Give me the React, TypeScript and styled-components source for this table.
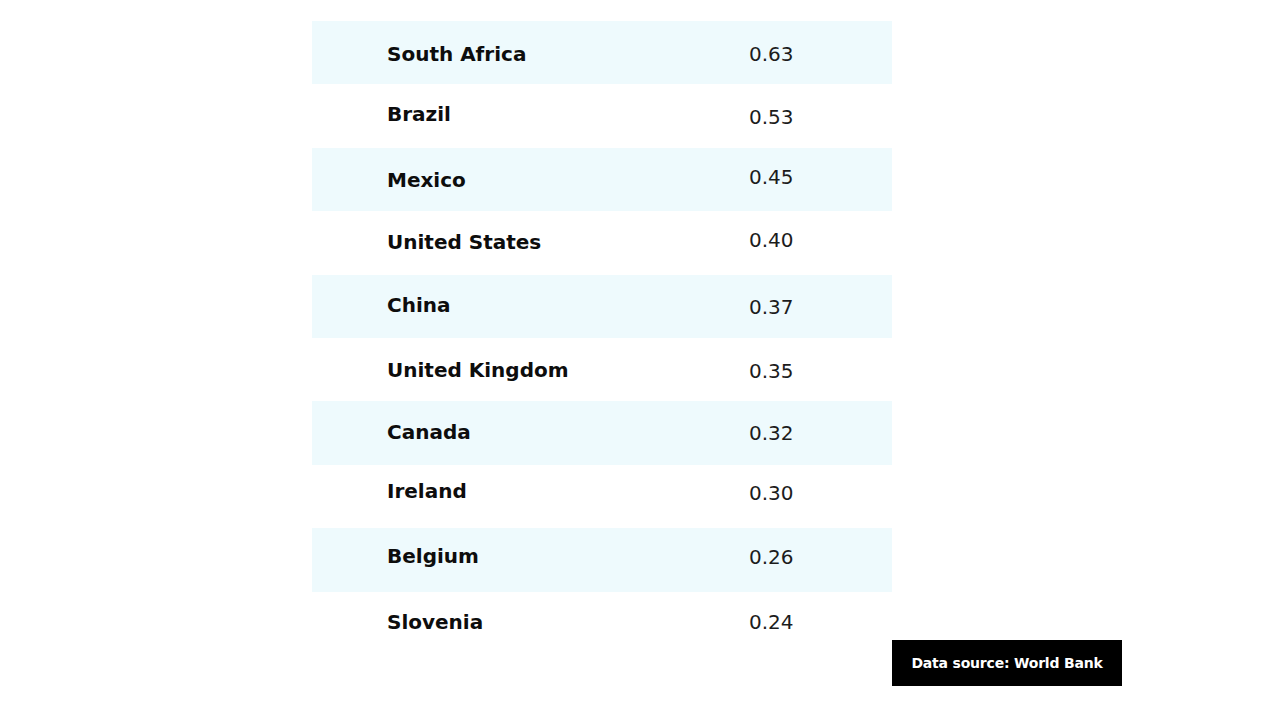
import React, { FC } from "react"
import styled, { createGlobalStyle } from "styled-components"

const GlobalStyle = createGlobalStyle`
  html, body {
    margin: 0;
    padding: 0;
    background: #ffffff;
  }
  body {
    font-family: "DejaVu Sans", "Liberation Sans", sans-serif;
    color: #111111;
  }
`

const Page = styled.main`
  display: flex;
  flex-direction: column;
  align-items: flex-start;
  padding: 21px 0 34px 312px;
  width: 1280px;
  box-sizing: border-box;
`

const Table = styled.div`
  display: flex;
  flex-direction: column;
  width: 580px;
`

const Row = styled.div<{ $shaded: boolean }>`
  display: grid;
  grid-template-columns: 362px 1fr;
  align-items: center;
  height: 63.4px;
  padding-left: 75px;
  background: ${({ $shaded }) => ($shaded ? "#eefafd" : "#ffffff")};
`

const Country = styled.span<{ $nudge: number }>`
  font-size: 20px;
  font-weight: 700;
  color: #0d0d0d;
  transform: translateY(${({ $nudge }) => $nudge}px);
`

const Value = styled.span<{ $nudge: number }>`
  font-size: 20px;
  font-weight: 400;
  color: #1c1c1c;
  transform: translateY(${({ $nudge }) => $nudge}px);
`

const Source = styled.div`
  margin: -15px 0 0 580px;
  width: 230px;
  height: 46px;
  display: flex;
  align-items: center;
  justify-content: center;
  background: #000000;
  color: #ffffff;
  font-size: 14px;
  font-weight: 700;
  letter-spacing: -0.2px;
`

const rows = [
  { name: "South Africa", value: "0.63", n: 1, v: 1 },
  { name: "Brazil", value: "0.53", n: -2, v: 1 },
  { name: "Mexico", value: "0.45", n: 1, v: -2 },
  { name: "United States", value: "0.40", n: -1, v: -3 },
  { name: "China", value: "0.37", n: -1, v: 1 },
  { name: "United Kingdom", value: "0.35", n: 0, v: 1 },
  { name: "Canada", value: "0.32", n: -1, v: 0 },
  { name: "Ireland", value: "0.30", n: -5, v: -3 },
  { name: "Belgium", value: "0.26", n: -4, v: -3 },
  { name: "Slovenia", value: "0.24", n: -1, v: -1 },
]

const App: FC = () => (
  <>
    <GlobalStyle />
    <Page>
      <Table>
        {rows.map((r, i) => (
          <Row key={r.name} $shaded={i % 2 === 0}>
            <Country $nudge={r.n}>{r.name}</Country>
            <Value $nudge={r.v}>{r.value}</Value>
          </Row>
        ))}
      </Table>
      <Source>Data source: World Bank</Source>
    </Page>
  </>
)

export default App
